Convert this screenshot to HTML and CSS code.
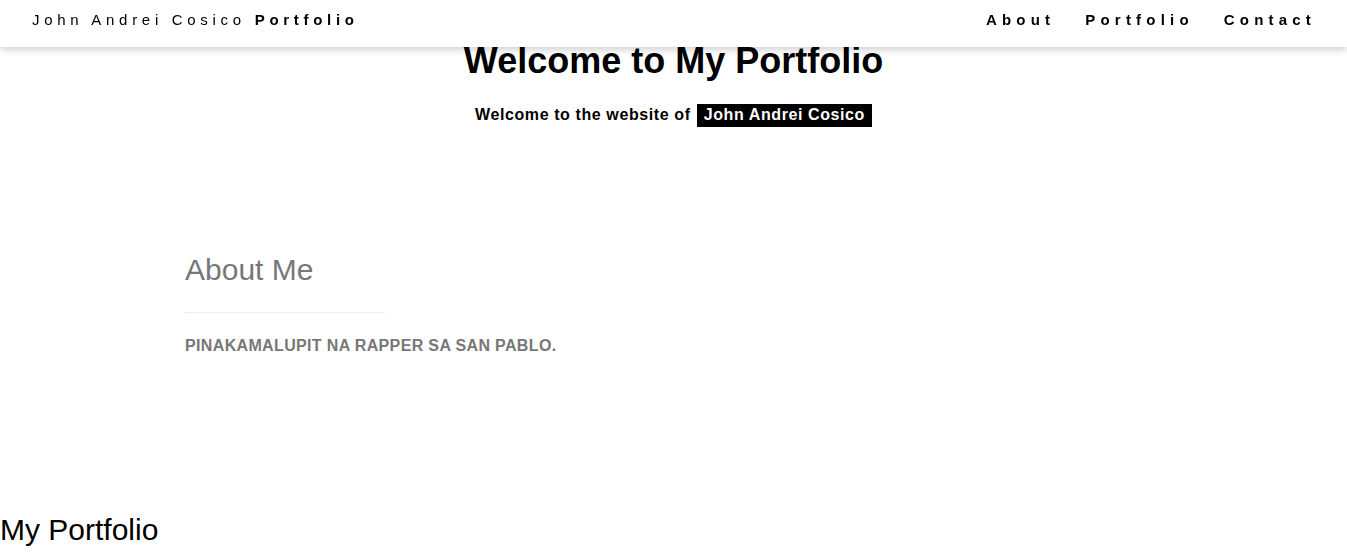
FILE: index.html
```html
<!DOCTYPE html>
<html lang="en">
<head>
<meta charset="utf-8">
<title>John Andrei Cosico Portfolio</title>
<link rel="stylesheet" href="styles.css">
</head>
<body>
<header class="topbar">
  <a class="brand" href="#">John Andrei Cosico <b>Portfolio</b></a>
  <nav class="menu">
    <a href="#about">About</a>
    <a href="#portfolio">Portfolio</a>
    <a href="#contact">Contact</a>
  </nav>
</header>
<main>
  <section class="hero">
    <h1 class="hero-title">Welcome to My Portfolio</h1>
    <p class="hero-sub">Welcome to the website of <span class="tag">John Andrei Cosico</span></p>
  </section>
  <section class="about" id="about">
    <h2 class="about-title">About Me</h2>
    <hr class="about-rule">
    <p class="about-text">Pinakamalupit na rapper sa San Pablo.</p>
  </section>
  <section class="portfolio" id="portfolio">
    <h2 class="portfolio-title">My Portfolio</h2>
  </section>
</main>
</body>
</html>
```

FILE: styles.css
```css
html, body {
  margin: 0;
  padding: 0;
  background: #fff;
  font-family: "Liberation Sans", Arial, sans-serif;
  color: #000;
}
.topbar {
  position: fixed;
  top: 0;
  left: 0;
  right: 0;
  height: 47px;
  background: #fff;
  box-shadow: 0 2px 8px rgba(0,0,0,0.22);
  display: flex;
  align-items: center;
  justify-content: space-between;
  padding: 0 31px 0 32px;
  box-sizing: border-box;
  z-index: 10;
}
.brand {
  color: #000;
  text-decoration: none;
  font-size: 15px;
  letter-spacing: 4.7px;
  margin-top: -9px;
}
.brand b { font-weight: bold; }
.menu {
  display: flex;
  gap: 30px;
  margin-top: -9px;
}
.menu a {
  color: #000;
  text-decoration: none;
  font-weight: bold;
  font-size: 15px;
  letter-spacing: 5.2px;
}
main { padding-top: 40px; }
.hero {
  text-align: center;
}
.hero-title {
  margin: 0;
  font-size: 36px;
  font-weight: bold;
  line-height: 42px;
}
.hero-sub {
  margin: 22px 0 0;
  font-size: 16px;
  font-weight: bold;
  letter-spacing: 0.6px;
}
.tag {
  display: inline-block;
  background: #000;
  color: #fff;
  padding: 2px 7px 3px;
  margin-left: 1px;
  line-height: 18px;
}
.about {
  padding: 126px 0 0 185px;
}
.about-title {
  margin: 0;
  font-size: 30px;
  font-weight: normal;
  color: #777;
  line-height: 34px;
}
.about-rule {
  width: 200px;
  margin: 25px 0 0;
  border: 0;
  border-top: 1px solid #eee;
  height: 0;
}
.about-text {
  margin: 24px 0 0;
  font-size: 16px;
  font-weight: bold;
  letter-spacing: 0.35px;
  text-transform: uppercase;
  color: #777;
}
.portfolio {
  padding-top: 158px;
}
.portfolio-title {
  margin: 0;
  font-size: 30px;
  font-weight: normal;
  line-height: 34px;
}
```
